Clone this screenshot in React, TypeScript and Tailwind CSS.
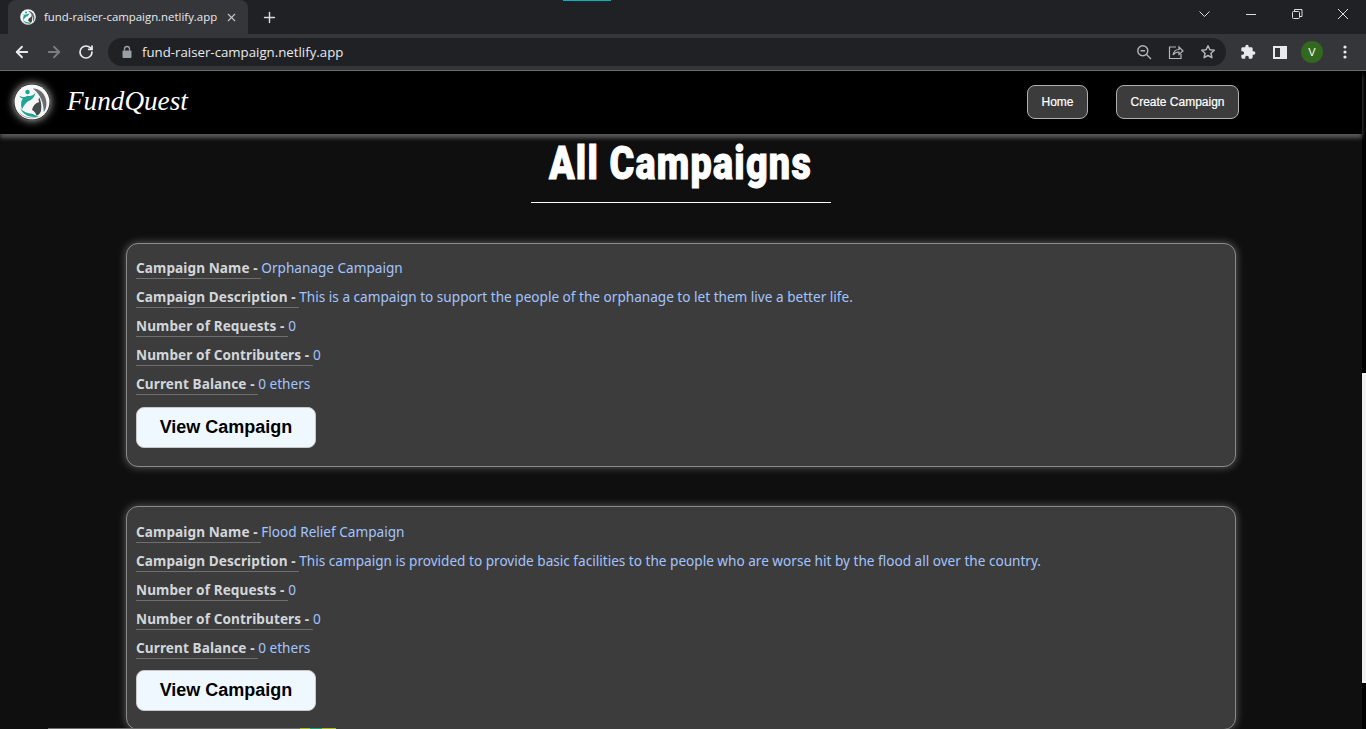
import React from "react";
import { ArrowLeft, ArrowRight, RotateCw, X, Plus } from "lucide-react";

function Logo({ size }: { size: number }) {
  return (
    <svg width={size} height={size} viewBox="0 0 40 40" className="shrink-0">
      <circle cx="20" cy="20" r="19.500" fill="#f6f7f7" />
      <circle cx="15" cy="9" r="2.500" fill="#1fa595" />
      <path d="M6 13C9 15 12 15 15 13C18 14 21 13 24 10C22 16 19 18 16 19C13 21 11 24 9 28C7 23 8 18 10 16C8 16 7 15 6 13z" fill="#1fa595" />
      <path d="M21 5C29 5 35 11 36 20C36.500 25 35 29 33 31C33 22 30 12 21 5z" fill="#6a6e71" />
      <path d="M20 29C21 24 24 21 28 20C27 18 27 17 28 15C30 19 31 24 30 30C29 33 27 35 25 35C24 32 22 30 20 29z" fill="#44494c" />
      <path d="M7 27C10 31 15 33 20 33L27 36C19 38 10 35 7 27z" fill="#1fa595" />
      <path d="M5 30C10 37 20 40 30 35C22 40 10 39 5 30z" fill="#777b7e" />
    </svg>
  );
}

function Card({ name, desc, first }: { name: string; desc: string; first?: boolean }) {
  const rows: [string, string][] = [
    ["Campaign Name - ", name],
    ["Campaign Description - ", desc],
    ["Number of Requests - ", "0"],
    ["Number of Contributers - ", "0"],
    ["Current Balance - ", "0 ethers"],
  ];
  return (
    <div className={`rounded-xl border border-[#8a8a8a] bg-[#3c3c3c] pb-[18px] pl-[9px] shadow-[0_0_8px_rgba(255,255,255,0.35)] ${first ? "pt-[9px]" : "pt-[10px]"}`}>
      <div className="flex flex-col">
        {rows.map(([k, v]) => (
          <p key={k} className="h-[29px] whitespace-pre text-[13.6px] leading-[29px] text-[#a3c4ff]" style={{ fontFamily: "'Noto Sans', sans-serif" }}>
            <span className="border-b border-[#6e6e6e] pb-[1px] font-bold tracking-[0.09px] text-[#d2d6da]">{k}</span>
            {v}
          </p>
        ))}
      </div>
      <button className={`h-[41px] w-[180px] rounded-lg border border-[#c8c8c8] bg-[#f0f8ff] text-[18px] font-bold text-black ${first ? "mt-[9px]" : "mt-[8px]"}`} style={{ fontFamily: "'Liberation Sans', sans-serif" }}>
        View Campaign
      </button>
    </div>
  );
}

export default function App() {
  return (
    <div className="relative flex h-[729px] w-[1366px] flex-col overflow-hidden bg-black" style={{ fontFamily: "'Liberation Sans', sans-serif" }}>
      {/* tab strip */}
      <div className="flex h-[34px] items-end bg-[#202124] pl-2">
        <div className="flex h-[34px] w-[240px] items-center rounded-t-lg bg-[#35363a] pl-3 pr-[10px]">
          <Logo size={16} />
          <span className="ml-2 whitespace-nowrap text-[11.4px] text-[#e8eaed]" style={{ fontFamily: "'Open Sans', sans-serif" }}>fund-raiser-campaign.netlify.app</span>
          <X size={13} strokeWidth={2} className="ml-auto shrink-0 text-[#c4c7c5]" />
        </div>
        <div className="ml-[13px] flex h-[34px] items-center">
          <Plus size={17} className="text-[#dadce0]" />
        </div>
        <div className="ml-auto flex h-[34px] items-start text-[#dadce0]">
          <svg width="46" height="28" viewBox="0 0 46 28" fill="none" stroke="currentColor"><path d="M17.500 11.500l5 5 5-5" /></svg>
          <svg width="46" height="28" viewBox="0 0 46 28" fill="none" stroke="currentColor"><path d="M18 14.500h10" /></svg>
          <svg width="46" height="28" viewBox="0 0 46 28" fill="none" stroke="currentColor"><rect x="18.500" y="11.500" width="7" height="7" rx="1" /><path d="M20.500 11.500V9.500h7.500V16.500h-2.500" /></svg>
          <svg width="46" height="28" viewBox="0 0 46 28" fill="none" stroke="currentColor"><path d="M18 9l10 10M28 9l-10 10" /></svg>
        </div>
      </div>
      {/* toolbar */}
      <div className="flex h-[36px] items-center bg-[#35363a] pl-[13px] text-[#e8eaed]">
        <ArrowLeft size={18} strokeWidth={2.4} />
        <ArrowRight size={18} strokeWidth={2.4} className="ml-[14px] text-[#7b7d80]" />
        <RotateCw size={16} strokeWidth={2.6} className="ml-[15px]" />
        <div className="ml-[14px] flex h-[28px] w-[1118px] items-center rounded-full bg-[#202124] pl-[13px] pr-[10px]">
          <svg width="12" height="14" viewBox="0 0 12 14" className="text-[#9aa0a6]"><rect x="1.500" y="5.500" width="9" height="7.500" rx="1" fill="currentColor" /><path d="M3.500 5.500V4a2.500 2.500 0 015 0v1.500" fill="none" stroke="currentColor" strokeWidth="1.300" /></svg>
          <span className="ml-[9px] pt-[1px] text-[13.25px] text-[#e8eaed]" style={{ fontFamily: "'Open Sans', sans-serif" }}>fund-raiser-campaign.netlify.app</span>
          <div className="ml-auto flex items-center gap-[16px] text-[#b4b6b9]">
            <svg width="16" height="16" viewBox="0 0 16 16" fill="none" stroke="currentColor" strokeWidth="1.400"><circle cx="6.800" cy="6.800" r="5" /><path d="M10.500 10.500l4.500 4.500M4.500 6.800h4.600" /></svg>
            <svg width="16" height="16" viewBox="0 0 16 16" fill="none" stroke="currentColor" strokeWidth="1.200"><path d="M8 3H1.500v11.500H13V10" /><path d="M5 11c.5-3 2.500-5.500 6-5.500V3l4 4-4 3.500V8c-2.500 0-4.500 1-6 3z" /></svg>
            <svg width="16" height="16" viewBox="0 0 16 16" fill="none" stroke="currentColor" strokeWidth="1.500"><path d="M8 1.800l1.900 4 4.400.5-3.300 3 .9 4.400L8 11.500l-3.900 2.200.9-4.400-3.300-3 4.400-.5z" strokeLinejoin="round" /></svg>
          </div>
        </div>
        <svg width="16" height="16" viewBox="0 0 24 24" fill="#e8eaed" className="ml-[14px]"><path d="M20.500 11H19V7c0-1.100-.9-2-2-2h-4V3.500C13 2.120 11.880 1 10.500 1S8 2.120 8 3.500V5H4c-1.100 0-1.990.9-1.990 2v3.800H3.500c1.490 0 2.700 1.210 2.700 2.700s-1.210 2.700-2.700 2.700H2V20c0 1.100.9 2 2 2h3.800v-1.500c0-1.490 1.210-2.700 2.700-2.700 1.490 0 2.700 1.210 2.700 2.700V22H17c1.100 0 2-.9 2-2v-4h1.500c1.380 0 2.500-1.120 2.500-2.500S21.880 11 20.500 11z" /></svg>
        <div className="ml-[17px] flex h-[13px] w-[14px] justify-end border-2 border-[#e8eaed]"><div className="h-full w-[5px] bg-[#e8eaed]" /></div>
        <div className="ml-[14px] flex h-[22px] w-[22px] items-center justify-center rounded-full bg-[#33691e] text-[11px] text-white">V</div>
        <svg width="4" height="14" viewBox="0 0 4 14" fill="#e8eaed" className="ml-[20px]"><circle cx="2" cy="2" r="1.600" /><circle cx="2" cy="7" r="1.600" /><circle cx="2" cy="12" r="1.600" /></svg>
      </div>
      <div className="h-px bg-[#6b6c6e]" />
      {/* page */}
      <div className="flex min-h-0 flex-1">
        <div className="flex min-w-0 flex-1 flex-col bg-[#0f0f0f]">
          <nav className="z-10 flex h-[63px] shrink-0 items-center bg-black pb-[2px] pl-[14px] shadow-[0_4px_4px_rgba(120,120,120,0.7)]">
            <div className="rounded-full shadow-[0_0_8px_rgba(255,255,255,0.8)]"><Logo size={36} /></div>
            <span className="ml-[17px] w-[122px] whitespace-nowrap text-[27.2px] italic text-white" style={{ fontFamily: "'Liberation Serif', serif" }}>FundQuest</span>
            <button className="ml-[838px] h-[34px] w-[61px] rounded-lg border border-[#b0b0b0] bg-[#3c3c3c] text-[12px] text-white" style={{ WebkitTextStroke: "0.2px white" }}>Home</button>
            <button className="ml-[28px] h-[34px] w-[123px] rounded-lg border border-[#b0b0b0] bg-[#3c3c3c] text-[12px] text-white" style={{ WebkitTextStroke: "0.2px white" }}>Create Campaign</button>
          </nav>
          <div className="flex flex-col items-center">
            <h1 className="mt-[5px] ml-[-1px] h-[49px] scale-x-[0.82] whitespace-nowrap text-[46px] leading-[49px] font-black tracking-[1.5px] text-white" style={{ fontFamily: "'Roboto', sans-serif", WebkitTextStroke: "1px white" }}>All Campaigns</h1>
            <div className="mt-[14px] h-px w-[300px] bg-white" />
          </div>
          <div className="mt-[40px] ml-[126px] flex w-[1110px] flex-col gap-[39px]">
            <Card first name="Orphanage Campaign" desc="This is a campaign to support the people of the orphanage to let them live a better life." />
            <Card name="Flood Relief Campaign" desc="This campaign is provided to provide basic facilities to the people who are worse hit by the flood all over the country." />
          </div>
        </div>
        <div className="w-1 shrink-0 bg-black">
          <div className="mt-[302px] h-[310px] w-1 bg-[#f1f1f1]" />
        </div>
      </div>
      {/* overlays */}
      <div className="absolute left-[563px] top-0 h-px w-[48px] bg-[#00b4c4]" />
      <div className="absolute bottom-0 left-[48px] flex h-px w-[288px] justify-end bg-[#6e6e6e]">
        <div className="h-full w-[10px] bg-[#a8b820]" />
        <div className="h-full w-[12px] bg-[#20a070]" />
        <div className="h-full w-[14px] bg-[#a8b820]" />
      </div>
    </div>
  );
}
